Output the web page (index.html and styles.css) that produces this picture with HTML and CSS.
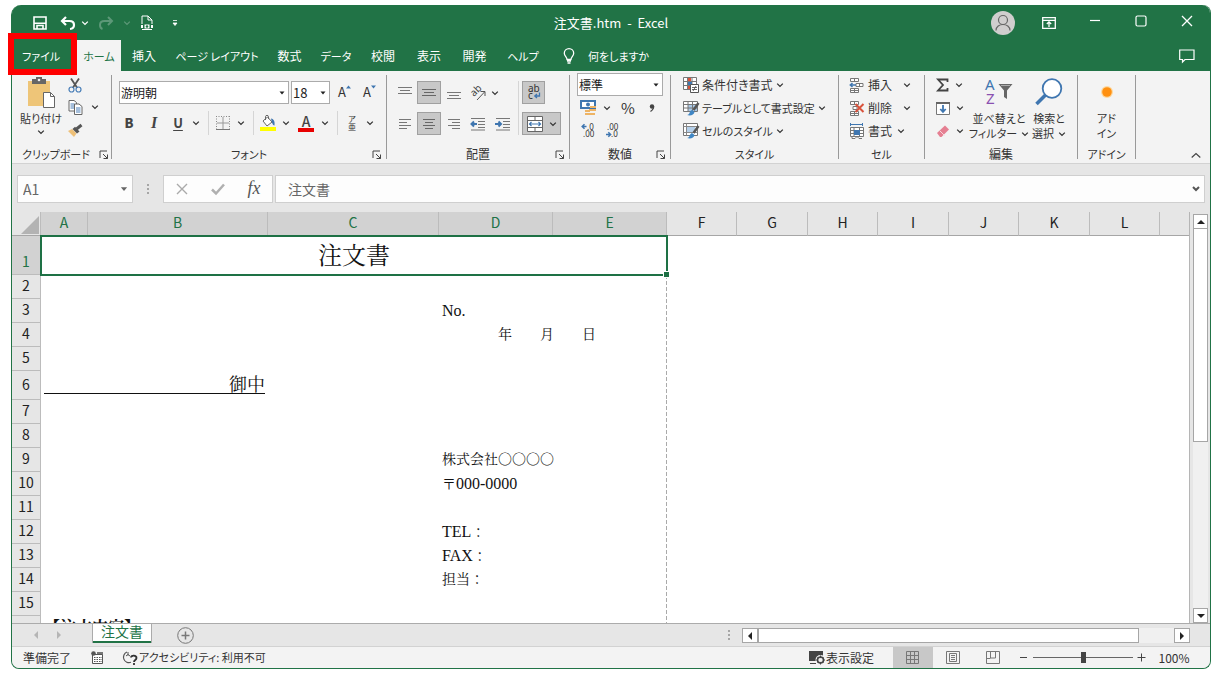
FILE: index.html
```html
<!DOCTYPE html>
<html lang="ja">
<head>
<meta charset="utf-8">
<title>注文書.htm - Excel</title>
<link rel="stylesheet" href="styles.css">
</head>
<body>
<svg class="defs" aria-hidden="true">
  <symbol id="chev" viewBox="0 0 8 8"><path d="M1.200 2.600 4 5.400 6.800 2.600" fill="none" stroke="currentColor" stroke-width="1.300"/></symbol>
  <symbol id="tri" viewBox="0 0 8 8"><path d="M1.500 2.500h5L4 5.500z" fill="currentColor"/></symbol>
  <symbol id="launch" viewBox="0 0 10 10"><path d="M1 8V1h7M4 4l4.500 4.500M8.500 4.500v4h-4" fill="none" stroke="#444"/></symbol>
  <symbol id="dots" viewBox="0 0 4 12"><path d="M1 1h2v2H1zM1 5h2v2H1zM1 9h2v2H1z" fill="#a6a6a6"/></symbol>
</svg>
<div class="window">
  <header class="titlebar">
    <div class="qat">
      <button aria-label="上書き保存"><svg width="14" height="14" viewBox="0 0 14 14"><path d="M1 1h12v12H1zM4 13V9.500h6V13" fill="none" stroke="#fff" stroke-width="1.600"/><path d="M1 6.500h12V8H1z" fill="#fff"/></svg></button>
      <button aria-label="元に戻す"><svg width="16" height="14" viewBox="0 0 16 14"><path d="M6 1 2 5l4 4M2 5h7.500c3 0 4.500 1.800 4.500 4 0 2.300-1.600 3.800-4 4" fill="none" stroke="#fff" stroke-width="2.200"/></svg></button>
      <button aria-label="元に戻すの一覧"><svg width="8" height="8"><use href="#chev"/></svg></button>
      <button class="dim" aria-label="やり直し"><svg width="16" height="14" viewBox="0 0 16 14"><path d="m10 1 4 4-4 4M14 5H6.500C3.500 5 2 6.800 2 9c0 2.300 1 3.500 2.500 4" fill="none" stroke="currentColor" stroke-width="2"/></svg></button>
      <button class="dim" aria-label="やり直しの一覧"><svg width="8" height="8"><use href="#chev"/></svg></button>
      <button aria-label="印刷プレビュー"><svg width="14" height="16" viewBox="0 0 14 16"><path d="M2 9V1h6l4 4v4M8 1v4h4M2 14.500h10" fill="none" stroke="#fff"/><path d="M1 10h2v3H1zM11 10h2v3h-2zM4.500 9.500h5v4h-5z" fill="#fff"/><circle cx="7" cy="11.500" r="1.300" fill="#217346"/></svg></button>
      <button aria-label="クイック アクセスのカスタマイズ"><svg width="8" height="8" viewBox="0 0 8 8"><path d="M2 1.500h4M2 4h4L4 6.500z" fill="#fff" stroke="#fff" stroke-width=".8"/></svg></button>
    </div>
    <h1>注文書.htm&nbsp; -&nbsp; Excel</h1>
    <div class="syscontrols">
      <button class="avatar" aria-label="アカウント"><svg width="24" height="24" viewBox="0 0 24 24"><circle cx="12" cy="12" r="12" fill="#d0cece"/><circle cx="12" cy="9" r="4.500" fill="none" stroke="#666" stroke-width="1.200"/><path d="M5 19.500c0-8 14-8 14 0" fill="none" stroke="#666" stroke-width="1.200"/></svg></button>
      <button aria-label="リボンの表示オプション"><svg width="14" height="12" viewBox="0 0 14 12"><path d="M.7.700h12.600v10.600H.7zM.7 3.300h12.600M7 10V5M4.800 7 7 4.800 9.200 7" fill="none" stroke="#fff" stroke-width="1.300"/></svg></button>
      <button aria-label="最小化"><svg width="12" height="16" viewBox="0 0 12 16"><path d="M1 5.500h10" stroke="#fff" stroke-width="1.200"/></svg></button>
      <button class="up" aria-label="最大化"><svg width="12" height="12" viewBox="0 0 12 12"><rect x="1" y="1" width="10" height="10" rx="1.500" fill="none" stroke="#fff" stroke-width="1.200"/></svg></button>
      <button class="up" aria-label="閉じる"><svg width="12" height="12" viewBox="0 0 12 12"><path d="m1 1 10 10M11 1 1 11" stroke="#fff" stroke-width="1.300"/></svg></button>
    </div>
  </header>

  <nav class="tabs">
    <button class="file kana">ファイル</button>
    <button class="active kana">ホーム</button>
    <button>挿入</button>
    <button class="kana">ページ レイアウト</button>
    <button>数式</button>
    <button class="kana">データ</button>
    <button>校閲</button>
    <button>表示</button>
    <button>開発</button>
    <button class="kana">ヘルプ</button>
    <button class="tellme kana"><svg width="12" height="16" viewBox="0 0 12 16"><path d="M4 11.500C4 9 1.300 8.300 1.300 5.300a4.700 4.700 0 0 1 9.400 0C10.700 8.300 8 9 8 11.500zM4 13h4M4.500 15h3" fill="none" stroke="#fff" stroke-width="1.300"/></svg>何をしますか</button>
    <button class="comment" aria-label="コメント"><svg width="16" height="14" viewBox="0 0 16 14"><path d="M.7 1h14.300v9.500H6L3.500 13v-2.500H.7z" fill="none" stroke="#fff" stroke-width="1.200"/></svg></button>
  </nav>

  <section class="ribbon">
    <div class="group g-clip">
      <div class="tools clip">
        <button class="big"><svg width="30" height="32" viewBox="0 0 30 32"><path d="M2 4h22v25H2z" fill="#eec578"/><path d="M6 2h4V0h6v2h4v5H6z" fill="#666"/><circle cx="13" cy="3" r="1.300" fill="#f3f3f3"/><path d="M17.500 15.500h7l4 4v11h-11z" fill="#fff" stroke="#666"/><path d="M24.500 15.500v4h4" fill="none" stroke="#666"/></svg><span>貼り付け</span><svg width="8" height="8"><use href="#chev"/></svg></button>
        <div class="stack">
          <button aria-label="切り取り"><svg width="14" height="15" viewBox="0 0 14 15"><path d="M3 0.500 9.300 10M11 .500 4.700 10" stroke="#555" stroke-width="1.800"/><circle cx="3.500" cy="11.500" r="2.500" fill="none" stroke="#4a7fb8" stroke-width="1.200"/><circle cx="10.500" cy="11.500" r="2.500" fill="none" stroke="#4a7fb8" stroke-width="1.200"/></svg></button>
          <button class="pair" aria-label="コピー"><svg width="15" height="15" viewBox="0 0 15 15"><path d="M1 .500h5l2.500 2V11H1z" fill="#fff" stroke="#666"/><path d="M2.500 4h4M2.500 6h4M2.500 8h4" stroke="#4a7fb8"/><path d="M6.500 4H11l3 2.500v8H6.500z" fill="#fff" stroke="#666"/><path d="M8 8h4.500M8 10h4.500M8 12h4.500" stroke="#4a7fb8"/></svg><svg width="8" height="8"><use href="#chev"/></svg></button>
          <button aria-label="書式のコピー"><svg width="15" height="13" viewBox="0 0 15 13"><path d="m0 7 4-2 4.500 4.500L6 13z" fill="#eec078"/><path d="M4.500 5 7 2.700l4.500 4.800-2.500 2z" fill="#555"/><path d="m8.500 5 5-4" stroke="#555" stroke-width="3"/></svg></button>
        </div>
      </div>
      <div class="label kana"><span>クリップボード</span><button aria-label="クリップボードの詳細"><svg width="10" height="10"><use href="#launch"/></svg></button></div>
    </div>

    <div class="group g-font">
      <div class="tools fonttools">
        <div class="fontrow">
          <label class="pick name"><select aria-label="フォント"><option>游明朝</option></select><svg width="8" height="8"><use href="#tri"/></svg></label>
          <label class="pick size"><select aria-label="フォント サイズ"><option>18</option></select><svg width="8" height="8"><use href="#tri"/></svg></label>
          <button class="grow" aria-label="フォント サイズの拡大">A<svg width="5" height="4" viewBox="0 0 5 4"><path d="M0 3.500 2.500.5 5 3.500z" fill="#3f76b0"/></svg></button>
          <button class="grow" aria-label="フォント サイズの縮小">A<svg width="5" height="4" viewBox="0 0 5 4"><path d="M0 .5h5L2.500 3.500z" fill="#3f76b0"/></svg></button>
        </div>
        <div class="stylerow">
          <button class="fmt"><b>B</b></button>
          <button class="fmt italic"><i>I</i></button>
          <button class="fmt"><u>U</u></button>
          <button aria-label="下線の種類"><svg width="8" height="8"><use href="#chev"/></svg></button>
          <i class="vsep"></i>
          <button aria-label="罫線"><svg width="14" height="14" viewBox="0 0 14 14"><path d="M.5 0v13M13.500 0v13M0 .5h14" stroke="#888" stroke-dasharray="1 1.500" fill="none"/><path d="M7 1v12M1 7h12" stroke="#999"/><path d="M0 13.500h14" stroke="#777"/></svg></button>
          <button aria-label="罫線の種類"><svg width="8" height="8"><use href="#chev"/></svg></button>
          <i class="vsep"></i>
          <button aria-label="塗りつぶしの色"><svg width="16" height="16" viewBox="0 0 16 16"><path d="M0 12h16v4H0z" fill="#ff0"/><path d="m3 6 4.500-4L12 7l-5 4z" fill="#fff" stroke="#666"/><path d="M5.500 5V1.500c0-1.500 3-1.500 3 0V4" fill="none" stroke="#666"/><path d="M11 3.500c3 .5 4 3 3.500 7-2 0-2.500-3-3.500-7" fill="#3f76b0"/></svg></button>
          <button aria-label="塗りつぶしの色の一覧"><svg width="8" height="8"><use href="#chev"/></svg></button>
          <button class="fontcolor" aria-label="フォントの色">A</button>
          <button aria-label="フォントの色の一覧"><svg width="8" height="8"><use href="#chev"/></svg></button>
          <i class="vsep"></i>
          <button class="ruby" aria-label="ふりがなの表示"><span>ア</span><span>亜</span></button>
          <button aria-label="ふりがなの設定"><svg width="8" height="8"><use href="#chev"/></svg></button>
        </div>
      </div>
      <div class="label kana"><span>フォント</span><button aria-label="フォントの詳細"><svg width="10" height="10"><use href="#launch"/></svg></button></div>
    </div>

    <div class="group g-align">
      <div class="tools aligntools">
        <button aria-label="上揃え"><svg width="14" height="12" viewBox="0 0 14 12"><path d="M0 .5h14M2 3.500h10M0 6.500h14" stroke="#777"/></svg></button>
        <button class="on" aria-label="上下中央揃え"><svg width="14" height="12" viewBox="0 0 14 12"><path d="M0 2.500h14M2 5.500h10M0 8.500h14" stroke="#666"/></svg></button>
        <button class="low" aria-label="下揃え"><svg width="14" height="12" viewBox="0 0 14 12"><path d="M0 3.500h14M2 6.500h10M0 9.500h14" stroke="#777"/></svg></button>
        <button aria-label="方向"><svg width="16" height="16" viewBox="0 0 16 16"><text x="0" y="0" transform="translate(4 12) rotate(-45)" font-size="10" font-family="Noto Sans" fill="#444">ab</text><path d="m7 15 7.500-8M10.500 6.500H15V11" fill="none" stroke="#555"/></svg></button>
        <button class="start" aria-label="方向の一覧"><svg width="8" height="8"><use href="#chev"/></svg></button>
        <i class="vsep tall"></i>
        <button class="on wrap" aria-label="折り返して全体を表示する"><svg width="16" height="17" viewBox="0 0 16 17"><text x="2" y="8" font-size="10" font-family="Noto Sans" fill="#333">ab</text><text x="2" y="15" font-size="10" font-family="Noto Sans" fill="#333">c</text><path d="M13.500 8.500v3.500H9M11 10l-2.200 2L11 14" fill="none" stroke="#3f76b0" stroke-width="1.300"/></svg></button>
        <button aria-label="左揃え"><svg width="12" height="12" viewBox="0 0 12 12"><path d="M0 1.500h12M0 4.500h8M0 7.500h12M0 10.500h8" stroke="#777"/></svg></button>
        <button class="on" aria-label="中央揃え"><svg width="14" height="12" viewBox="0 0 14 12"><path d="M1 1.500h12M3 4.500h8M1 7.500h12M3 10.500h8" stroke="#666"/></svg></button>
        <button aria-label="右揃え"><svg width="12" height="12" viewBox="0 0 12 12"><path d="M0 1.500h12M4 4.500h8M0 7.500h12M4 10.500h8" stroke="#777"/></svg></button>
        <button aria-label="インデントを減らす"><svg width="16" height="14" viewBox="0 0 16 14"><path d="M1 1.500h14M8 4.500h7M8 7.500h7M8 10.500h7M1 13h14" stroke="#777"/><path d="M7 7H2M4 4.500 1.500 7 4 9.500" fill="none" stroke="#3f76b0" stroke-width="2"/></svg></button>
        <button aria-label="インデントを増やす"><svg width="16" height="14" viewBox="0 0 16 14"><path d="M1 1.500h14M8 4.500h7M8 7.500h7M8 10.500h7M1 13h14" stroke="#777"/><path d="M0 7h5M3.500 4.500 6 7 3.500 9.500" fill="none" stroke="#3f76b0" stroke-width="2"/></svg></button>
        <button class="on pair" aria-label="セルを結合して中央揃え"><svg width="16" height="16" viewBox="0 0 16 16"><path d="M.5.500h15v15H.5zM.5 4.500h15M.5 11.500h15M8 .500v4M8 11.500v4" fill="#fff" stroke="#666"/><path d="M2.500 8h11M4.500 6l-2 2 2 2M11.500 6l2 2-2 2" fill="none" stroke="#3f76b0" stroke-width="1.200"/></svg><svg width="8" height="8"><use href="#chev"/></svg></button>
      </div>
      <div class="label"><span>配置</span><button aria-label="配置の詳細"><svg width="10" height="10"><use href="#launch"/></svg></button></div>
    </div>

    <div class="group g-num">
      <div class="tools numtools">
        <label class="pick format"><select aria-label="表示形式"><option>標準</option></select><svg width="8" height="8"><use href="#tri"/></svg></label>
        <div class="numrow">
          <button aria-label="通貨表示形式"><svg width="17" height="15" viewBox="0 0 17 15"><path d="M1 1h14v7H1z" fill="#fff" stroke="#3f76b0" stroke-width="2"/><circle cx="8" cy="4.500" r="2" fill="#3f76b0"/><path d="M10 6h6v2h-6zM9 9h7v2H9zM5 10h5v2H5zM5 13h10v2H5z" fill="#eeb465"/></svg></button>
          <button aria-label="通貨の一覧"><svg width="8" height="8"><use href="#chev"/></svg></button>
          <button class="sign">%</button>
          <button class="comma" aria-label="桁区切りスタイル"><svg width="6" height="8" viewBox="0 0 6 8"><circle cx="3" cy="2.500" r="2.200" fill="#444"/><path d="M4.500 2.500c.5 2-1 3.500-3 5" fill="none" stroke="#444" stroke-width="1.300"/></svg></button>
        </div>
        <div class="decrow">
          <button aria-label="小数点以下の表示桁数を増やす"><svg width="14" height="15" viewBox="0 0 14 15"><path d="M5.500 3.500H1.500M3.500 1.300 1.200 3.500l2.300 2.200" fill="none" stroke="#3f76b0" stroke-width="1.500"/><text x="6" y="7" font-size="8" font-family="Noto Sans" fill="#333">.0</text><text x="2" y="14" font-size="8" font-family="Noto Sans" fill="#333">.00</text></svg></button>
          <button aria-label="小数点以下の表示桁数を減らす"><svg width="14" height="15" viewBox="0 0 14 15"><path d="M1 11.500h4M3.300 9.300l2.300 2.200-2.300 2.200" fill="none" stroke="#3f76b0" stroke-width="1.500"/><text x="2" y="7" font-size="8" font-family="Noto Sans" fill="#333">.00</text><text x="6" y="14" font-size="8" font-family="Noto Sans" fill="#333">.0</text></svg></button>
        </div>
      </div>
      <div class="label"><span>数値</span><button aria-label="数値の詳細"><svg width="10" height="10"><use href="#launch"/></svg></button></div>
    </div>

    <div class="group g-style">
      <div class="tools list">
        <button><svg width="16" height="16" viewBox="0 0 16 16"><path d="M.5.500h13v12H.5zM.5 4.500h13M.5 8.500h13M4.500.500v12M9 .500v12" fill="#fff" stroke="#777"/><path d="M5 1h3v3H5zM5 9h3v3H5z" fill="#d9533c"/><path d="M5 5h4v3H5z" fill="#3f76b0"/><path d="M7.500 7.500h8v8h-8z" fill="#fff" stroke="#555"/><path d="M9 10.500h5M9 12.500h5M13 9l-3 5" stroke="#444" stroke-width=".8"/></svg>条件付き書式<svg width="8" height="8"><use href="#chev"/></svg></button>
        <button class="kana"><svg width="16" height="16" viewBox="0 0 16 16"><path d="M.5 1.500h14v10H.5z" fill="#fff"/><path d="M5 5h9v6H5z" fill="#a9c8e6"/><path d="M.5 1.500h14v10H.5zM.5 4.500h14M.5 8h14M5 1.500v10M9.500 1.500v10" fill="none" stroke="#777"/><path d="m15.500 3-5 7" stroke="#555" stroke-width="2.500"/><path d="M4 15c3 0 2-4 5-5l2.500 2c-.5 3-4 4-7.500 3" fill="#3f86c4"/></svg>テーブルとして書式設定<svg width="8" height="8"><use href="#chev"/></svg></button>
        <button class="kana"><svg width="16" height="16" viewBox="0 0 16 16"><path d="M.5.500h14v12H.5z" fill="#fff" stroke="#777"/><path d="M3 4h9v5H3z" fill="#b5d0ea"/><path d="M.5 3.500h14M3.500.500v12M.5 9.500h14" stroke="#888"/><path d="m15.500 3-5 7" stroke="#555" stroke-width="2.500"/><path d="M4 15c3 0 2-4 5-5l2.500 2c-.5 3-4 4-7.500 3" fill="#3f86c4"/></svg>セルのスタイル<svg width="8" height="8"><use href="#chev"/></svg></button>
      </div>
      <div class="label kana"><span>スタイル</span></div>
    </div>

    <div class="group g-cell">
      <div class="tools list">
        <button class="spread"><svg width="15" height="15" viewBox="0 0 15 15"><path d="M1.500.500h8v3h-8zM5.500.500v3M1.500 10.500h8v4h-8zM5.500 10.500v4M1.500 12.500h8M7 5.500h7v3H7zM10.500 5.500v3" fill="#fff" stroke="#777"/><path d="M7 7H1.500M3.500 5 1.300 7l2.200 2" fill="none" stroke="#3f76b0" stroke-width="1.500"/></svg>挿入<svg width="8" height="8"><use href="#chev"/></svg></button>
        <button class="spread"><svg width="15" height="15" viewBox="0 0 15 15"><path d="M1.500.500h8v3h-8zM5.500.500v3M1.500 10.500h8v4h-8zM5.500 10.500v4M1.500 12.500h8M4 5.500h4v3H4z" fill="#fff" stroke="#777"/><path d="m6.500 3 8 8M14.500 3l-8 8" stroke="#d9533c" stroke-width="2"/></svg>削除<svg width="8" height="8"><use href="#chev"/></svg></button>
        <button class="spread near"><svg width="15" height="16" viewBox="0 0 15 16"><path d="M1.500 0v3M13.500 0v3M2 1.500h11" stroke="#3f76b0"/><path d="M1.500 4.500h13v9h-13zM1.500 7.500h13M1.500 10.500h13M5 4.500v9M10.500 4.500v9M3 13.500v2h3l2-2 2 2h3" fill="#fff" stroke="#777"/><path d="M5 7h6v5H5z" fill="#3f76b0"/></svg>書式<svg width="8" height="8"><use href="#chev"/></svg></button>
      </div>
      <div class="label kana"><span>セル</span></div>
    </div>

    <div class="group g-edit">
      <div class="tools edit">
        <div class="list">
          <button class="sum" aria-label="オート SUM"><svg width="13" height="14" viewBox="0 0 13 14"><path d="M11.500 4V1.500H2L7 7l-5 5.500h9.500V10" fill="none" stroke="#444" stroke-width="1.800"/></svg><svg width="8" height="8"><use href="#chev"/></svg></button>
          <button aria-label="フィル"><svg width="14" height="14" viewBox="0 0 14 14"><path d="M.5 1.500h13v12H.5z" fill="#fff" stroke="#777"/><path d="M0 1h14v2H0z" fill="#666"/><path d="M7 4v7M4.300 8 7 11l2.700-3" fill="none" stroke="#3f76b0" stroke-width="1.800"/></svg><svg width="8" height="8"><use href="#chev"/></svg></button>
          <button aria-label="クリア"><svg width="14" height="14" viewBox="0 0 14 14"><path d="m1 9 8-7.500 4 4L5.500 13H4z" fill="#e57f92"/><path d="m3.500 6.500 5 5" stroke="#f8d5da"/></svg><svg width="8" height="8"><use href="#chev"/></svg></button>
        </div>
        <button class="big"><svg width="30" height="28" viewBox="0 0 30 28"><text x="1" y="12" font-size="15" font-family="Noto Sans" fill="#3f76b0">A</text><text x="2" y="26" font-size="15" font-family="Noto Sans" fill="#8a50b0">Z</text><path d="M14.500 6h14L23 12.500V21l-3-2v-6.500z" fill="#666"/><path d="M17 7.500h9" stroke="#aaa"/></svg><span>並べ替えと</span><span>フィルター <svg width="8" height="8"><use href="#chev"/></svg></span></button>
        <button class="big"><svg width="28" height="28" viewBox="0 0 28 28"><circle cx="17" cy="10.500" r="9.300" fill="#fff" stroke="#3f76b0" stroke-width="1.800"/><path d="M10.500 17 1.500 26" stroke="#3f76b0" stroke-width="3.500"/></svg><span>検索と</span><span>選択 <svg width="8" height="8"><use href="#chev"/></svg></span></button>
      </div>
      <div class="label"><span>編集</span></div>
    </div>

    <div class="group g-addin">
      <div class="tools addin">
        <button class="big"><svg width="28" height="28" viewBox="0 0 28 28"><circle cx="14" cy="14" r="6" fill="#fdd9a0"/><circle cx="14" cy="14" r="4.800" fill="#ff9010"/></svg><span>アド</span><span>イン</span></button>
      </div>
      <div class="label kana"><span>アドイン</span></div>
    </div>
    <button class="collapse" aria-label="リボンを折りたたむ"><svg width="10" height="8" viewBox="0 0 10 8"><path d="m.7 6.500 4.300-4 4.300 4" fill="none" stroke="#444" stroke-width="1.200"/></svg></button>
  </section>

  <section class="formulabar">
    <div class="namebox"><input value="A1" aria-label="名前ボックス"><button aria-label="名前の一覧"><svg width="10" height="10"><use href="#tri"/></svg></button></div>
    <svg class="grip" width="4" height="12"><use href="#dots"/></svg>
    <div class="fxbox">
      <button aria-label="キャンセル"><svg width="12" height="12" viewBox="0 0 12 12"><path d="m1 1 10 10M11 1 1 11" stroke="#aaa" stroke-width="1.400"/></svg></button>
      <button aria-label="入力"><svg width="14" height="12" viewBox="0 0 14 12"><path d="m1 6.500 4 4L13 1.500" fill="none" stroke="#b0b0b0" stroke-width="2.500"/></svg></button>
      <button class="fx" aria-label="関数の挿入">fx</button>
    </div>
    <div class="formula"><input value="注文書" aria-label="数式バー"><button aria-label="数式バーの展開"><svg width="8" height="6" viewBox="0 0 8 6"><path d="m1 1 3 3 3-3" fill="none" stroke="#555" stroke-width="2"/></svg></button></div>
  </section>

  <main class="workspace">
    <div class="sheet">
      <table>
        <colgroup><col class="c-head"><col class="c-a"><col class="c-b"><col class="c-c"><col class="c-d"><col class="c-d"><col class="c-n"><col class="c-w"><col class="c-n"><col class="c-w"><col class="c-n"><col class="c-w"><col class="c-n"><col></colgroup>
        <thead>
          <tr><th class="corner" aria-label="すべて選択"><svg width="18" height="18" viewBox="0 0 18 18"><path d="M18 0v18H0z" fill="#b3b3b3"/></svg></th><th class="sel">A</th><th class="sel">B</th><th class="sel">C</th><th class="sel">D</th><th class="sel">E</th><th>F</th><th>G</th><th>H</th><th>I</th><th>J</th><th>K</th><th>L</th><th></th></tr>
        </thead>
        <tbody>
          <tr class="r-title"><th class="sel">1</th><td class="selected" colspan="5">注文書<i class="handle"></i></td><td colspan="8"></td></tr>
          <tr><th>2</th><td colspan="5" class="edge"></td><td colspan="8"></td></tr>
          <tr><th>3</th><td colspan="3"></td><td colspan="2" class="edge"><span class="latin">No.</span></td><td colspan="8"></td></tr>
          <tr><th>4</th><td colspan="3"></td><td colspan="2" class="edge">　　　　年　　月　　日</td><td colspan="8"></td></tr>
          <tr><th>5</th><td colspan="5" class="edge"></td><td colspan="8"></td></tr>
          <tr class="r-to"><th>6</th><td colspan="2" class="to"><div>御中</div></td><td colspan="3" class="edge"></td><td colspan="8"></td></tr>
          <tr><th>7</th><td colspan="5" class="edge"></td><td colspan="8"></td></tr>
          <tr><th>8</th><td colspan="5" class="edge"></td><td colspan="8"></td></tr>
          <tr><th>9</th><td colspan="3"></td><td colspan="2" class="edge">株式会社〇〇〇〇</td><td colspan="8"></td></tr>
          <tr><th>10</th><td colspan="3"></td><td colspan="2" class="edge">〒<span class="latin">000-0000</span></td><td colspan="8"></td></tr>
          <tr><th>11</th><td colspan="5" class="edge"></td><td colspan="8"></td></tr>
          <tr><th>12</th><td colspan="3"></td><td colspan="2" class="edge"><span class="latin">TEL</span>：</td><td colspan="8"></td></tr>
          <tr><th>13</th><td colspan="3"></td><td colspan="2" class="edge"><span class="latin">FAX</span>：</td><td colspan="8"></td></tr>
          <tr><th>14</th><td colspan="3"></td><td colspan="2" class="edge">担当：</td><td colspan="8"></td></tr>
          <tr><th>15</th><td colspan="5" class="edge"></td><td colspan="8"></td></tr>
          <tr><th></th><td colspan="5" class="edge heading">【注文内容】</td><td colspan="8"></td></tr>
        </tbody>
      </table>
    </div>
    <div class="vscroll">
      <button aria-label="上へスクロール"><svg width="8" height="6" viewBox="0 0 8 6"><path d="m0 5 4-4 4 4z" fill="#222"/></svg></button>
      <div class="thumb"></div>
      <button aria-label="下へスクロール"><svg width="8" height="6" viewBox="0 0 8 6"><path d="m0 1 4 4 4-4z" fill="#222"/></svg></button>
    </div>
  </main>

  <div class="sheetbar">
    <div class="sheetnav">
      <button aria-label="前のシート"><svg width="6" height="8" viewBox="0 0 6 8"><path d="M5 0v8L1 4z" fill="#b5b5b5"/></svg></button>
      <button aria-label="次のシート"><svg width="6" height="8" viewBox="0 0 6 8"><path d="M1 0v8l4-4z" fill="#b5b5b5"/></svg></button>
    </div>
    <button class="sheettab">注文書</button>
    <button class="add" aria-label="新しいシート"><svg width="17" height="17" viewBox="0 0 17 17"><path d="M8.500 4.500v8M4.500 8.500h8" stroke="#777" stroke-width="1.500"/><circle cx="8.500" cy="8.500" r="7.800" fill="none" stroke="#777"/></svg></button>
    <svg class="split" width="4" height="12"><use href="#dots"/></svg>
    <div class="hscroll">
      <button aria-label="左へスクロール"><svg width="6" height="8" viewBox="0 0 6 8"><path d="M5 0v8L1 4z" fill="#222"/></svg></button>
      <div class="thumb"></div>
      <button aria-label="右へスクロール"><svg width="6" height="8" viewBox="0 0 6 8"><path d="M1 0v8l4-4z" fill="#222"/></svg></button>
    </div>
  </div>

  <footer class="status">
    <span class="ready">準備完了</span>
    <button class="macro" aria-label="マクロの記録"><svg width="13" height="13" viewBox="0 0 13 13"><path d="M1.500 3.500h10v9h-10z" fill="#fff" stroke="#555"/><path d="M6 3h6M3 6.500h8M3 8.500h8M3 10.500h8" stroke="#555" stroke-dasharray="1.500 1"/><circle cx="2.500" cy="2.500" r="2.300" fill="#555"/><path d="M6 1h6v2H6z" fill="#777"/></svg></button>
    <button class="a11y kana"><svg width="16" height="14" viewBox="0 0 16 14"><path d="M5 1a5.500 5.500 0 1 0 4 10.300" fill="none" stroke="#555" stroke-width="1.200"/><path d="M6 1v3.500M4 5l2-1.500 2 1.500" fill="none" stroke="#555"/><path d="M9 6.500C9 4 14.500 4 14.500 7c0 2-2.500 2-2.500 4M12 12v2" fill="none" stroke="#333" stroke-width="1.800"/></svg>アクセシビリティ: 利用不可</button>
    <button class="display"><svg width="17" height="15" viewBox="0 0 17 15"><path d="M0 1h14v10H0z" fill="#444"/><path d="M1 13.500h6" stroke="#444"/><circle cx="11.500" cy="10" r="5" fill="#f3f3f3"/><circle cx="11.500" cy="10" r="3" fill="none" stroke="#444" stroke-width="1.500"/><path d="M11.500 5.500v9M7 10h9M8.500 7l6 6M14.500 7l-6 6" stroke="#444"/><circle cx="11.500" cy="10" r="2" fill="#f3f3f3"/></svg>表示設定</button>
    <button class="view current" aria-label="標準"><svg width="14" height="14" viewBox="0 0 14 14"><path d="M.5.500h12v12H.5zM.5 4.500h12M.5 8.500h12M4.500.500v12M8.500.500v12" fill="none" stroke="#777"/></svg></button>
    <button class="view" aria-label="ページ レイアウト"><svg width="14" height="14" viewBox="0 0 14 14"><path d="M.5.500h13v12H.5zM3.500 2.500h7v8h-7zM5 4.500h4M5 6.500h4M5 8.500h4" fill="none" stroke="#777"/></svg></button>
    <button class="view" aria-label="改ページ プレビュー"><svg width="14" height="14" viewBox="0 0 14 14"><path d="M.5.500h13v12H.5zM4.500.500v6.500h5V.500M.5 7.500h4" fill="none" stroke="#777"/></svg></button>
    <button class="zoom" aria-label="縮小"><svg width="9" height="9" viewBox="0 0 9 9"><path d="M1 4.500h7" stroke="#444"/></svg></button>
    <input class="slider" type="range" min="0" max="100" value="50" aria-label="ズーム">
    <button class="zoom" aria-label="拡大"><svg width="9" height="9" viewBox="0 0 9 9"><path d="M.5 4.500h8M4.500.500v8" stroke="#444"/></svg></button>
    <button class="percent">100%</button>
  </footer>
</div>
</body>
</html>
```
FILE: styles.css
```css
* { box-sizing: border-box; }
body {
  margin: 0;
  padding: 5px 10px 11px 11px;
  height: 100vh;
  background: #fff;
  color: #333;
  font: 12px/16px "Noto Sans CJK JP", "Noto Sans", sans-serif;
  font-feature-settings: "palt";
}
button, input, select {
  margin: 0;
  padding: 0;
  border: 0;
  background: none;
  color: inherit;
  font: inherit;
  font-feature-settings: inherit;
  border-radius: 0;
}
button {
  display: flex;
  align-items: center;
  justify-content: center;
  white-space: nowrap;
}
svg { flex: none; display: block; overflow: visible; }
.defs { position: absolute; width: 0; height: 0; }
.kana { font-size: 11px; }

.window {
  height: 100%;
  display: flex;
  flex-direction: column;
  border: 1px solid #217346;
  border-top: 0;
  border-radius: 10px 8px 8px 8px;
  background: #e6e6e6;
}

/* title bar */
.titlebar {
  display: grid;
  grid-template-columns: 1fr auto 1fr;
  align-items: center;
  height: 35px;
  flex: none;
  background: #217346;
  color: #fff;
  border-radius: 9px 8px 0 0;
}
.titlebar h1 { margin: 0; font-size: 13px; font-weight: 400; }
.qat {
  display: grid;
  grid-template-columns: 26px 30px 4px 38px 4px 36px 20px;
  padding-left: 15px;
}
.dim { color: #5d9878; }
.syscontrols { display: flex; justify-content: flex-end; }
.syscontrols button { width: 46px; height: 32px; }
.syscontrols .up { padding-bottom: 4px; }

/* ribbon tabs */
.tabs {
  display: grid;
  grid-template-columns: 65px 44px 46px 100px 45px 48px 46px 46px 45px 52px auto 1fr;
  height: 31px;
  flex: none;
  background: #217346;
  color: #fff;
}
.tabs .active { background: #f3f3f3; color: #217346; }
.tabs .tellme { gap: 13px; padding-left: 14px; }
.tabs .comment { justify-self: end; padding-right: 15px; }
.file { position: relative; padding-right: 7px; }
.file::after {
  content: "";
  position: absolute;
  inset: -7px 0 -4px -4px;
  border: 6px solid #fe0000;
}

/* ribbon */
.ribbon {
  display: flex;
  flex: none;
  height: 93px;
  padding: 0 7px 4px 1px;
  background: #f3f3f3;
  border-bottom: 1px solid #d2d2d2;
}
.group {
  display: flex;
  flex-direction: column;
  margin-top: 4px;
  border-right: 1px solid #999;
}
.g-clip { width: 99px; }
.g-font { width: 275px; }
.g-align { width: 183px; }
.g-num { width: 101px; }
.g-style { width: 168px; }
.g-cell { width: 86px; }
.g-edit { width: 153px; }
.g-addin { width: 58px; }
.tools { flex: 1; min-height: 0; }
.label {
  display: grid;
  grid-template-columns: 14px 1fr 14px;
  height: 10px;
  line-height: 10px;
}
.label span { grid-column: 2; text-align: center; white-space: nowrap; }
.label button { justify-content: flex-start; height: 12px; }
.g-clip .label { grid-template-columns: 0 1fr 12px; }
.collapse { margin-left: auto; align-self: flex-end; width: 14px; height: 8px; }

.big { flex-direction: column; justify-content: flex-start; line-height: 15px; font-size: 11px; }
.big span { display: flex; align-items: center; gap: 4px; }
.clip { display: flex; padding-left: 5px; }
.clip .big { width: 46px; gap: 2px; padding-top: 2px; }
.stack { display: grid; grid-template-rows: 20px 24px 22px; justify-items: start; padding-left: 4px; }
.pair { gap: 8px; }

.fonttools { padding: 6px 5px 0 7px; display: flex; flex-direction: column; gap: 7px; }
.fontrow { display: flex; gap: 2px; }
.pick { display: grid; align-items: center; height: 23px; border: 1px solid #ababab; background: #fff; color: #222; }
.pick select { grid-area: 1 / 1; width: 100%; height: 100%; padding-left: 1px; appearance: none; outline: 0; }
.pick svg { grid-area: 1 / 1; justify-self: end; margin-right: 2px; pointer-events: none; }
.pick.name { width: 170px; }
.pick.size { width: 39px; }
.pick.size select { font-size: 13px; }
.pick.format { width: 86px; }
.grow { width: 21px; margin-left: 2px; font-size: 13px; align-items: flex-start; padding-top: 3px; }
.grow svg { margin-top: 1px; }
.stylerow {
  display: grid;
  grid-template-columns: 24px 26px 22px 14px 10px 20px 16px 8px 22px 14px 26px 12px 12px 18px 18px;
  height: 24px;
  margin-left: -2px;
}
.fmt { font-size: 13px; font-weight: 700; color: #444; }
.italic { font-family: "Liberation Serif", serif; font-size: 16px; }
.fmt u { text-underline-offset: 2px; }
.vsep { width: 1px; justify-self: center; background: #d5d5d5; }
.fontcolor {
  justify-self: center;
  align-self: center;
  width: 16px;
  height: 18px;
  line-height: 14px;
  border-bottom: 4px solid #e80000;
  font-size: 14px;
  font-weight: 500;
  color: #444;
}
.ruby { flex-direction: column; font-size: 8px; line-height: 8px; }

.aligntools {
  display: grid;
  grid-template-columns: 24px 25px 23px 26px 24px 7px 39px;
  grid-template-rows: 23px 23px;
  row-gap: 8px;
  padding: 6px 0 0 6px;
}
.on { background: #c8c8c8; border: 1px solid #a0a0a0; width: 24px; }
.on.wrap { width: 23px; }
.on.pair { width: 39px; gap: 6px; }
.low { padding-top: 4px; }
.start { justify-content: flex-start; }
.tall { grid-row: 1 / 3; grid-column: 6; }

.numtools { display: flex; flex-direction: column; padding-left: 7px; margin-top: -2px; }
.numrow { display: grid; grid-template-columns: 22px 16px 26px 22px; height: 23px; }
.sign { font-size: 15px; }
.decrow { display: flex; gap: 10px; height: 22px; padding-left: 4px; }

.list { display: grid; grid-template-rows: 20px 26px 20px; justify-items: start; }
.g-style .list { padding-left: 12px; }
.g-cell .list { padding-left: 10px; }
.list button { gap: 4px; }
.g-style .list button { gap: 3px; }
.spread { width: 62px; }
.spread svg:last-child { margin-left: auto; }
.spread.near { width: 56px; }
.edit { display: grid; grid-template-columns: 46px 56px 44px; }
.edit .list { padding-left: 11px; }
.edit .list button { gap: 6px; }
.edit .big, .addin .big { padding-top: 3px; }
.edit .big > svg, .addin .big > svg { margin-bottom: 5px; }
.addin { display: grid; }
.g-addin .label { grid-template-columns: 0 1fr 0; }

/* formula bar */
.formulabar { display: flex; align-items: center; flex: none; height: 48px; padding: 1px 5px 0 5px; color: #666; }
.formulabar input { min-width: 0; flex: 1; outline: 0; font-size: 14px; line-height: 20px; }
.namebox, .fxbox, .formula { display: flex; height: 28px; background: #fdfdfd; border: 1px solid #cfcfcf; }
.namebox { width: 116px; padding: 0 3px 0 5px; }
.grip { margin: 0 13px; }
.fxbox { width: 110px; margin-right: 2px; }
.fxbox button { flex: 1; }
.fx { font: italic 18px "Liberation Serif", serif; color: #555; }
.formula { flex: 1; padding: 0 4px 0 12px; }

/* grid */
.workspace { display: flex; flex: 1; min-height: 0; padding-right: 2px; }
.sheet { flex: 1; min-width: 0; overflow: hidden; border-right: 1px solid #b5b5b5; }
table { width: 100%; table-layout: fixed; border-spacing: 0; background: #fff; }
.c-head { width: 29px; }
.c-a { width: 47px; }
.c-b { width: 180px; }
.c-c { width: 171px; }
.c-d { width: 114px; }
.c-n { width: 70px; }
.c-w { width: 71px; }
th {
  padding: 0 0 3px;
  background: #e6e6e6;
  border-right: 1px solid #bcbcbc;
  border-bottom: 1px solid #bcbcbc;
  color: #222;
  font-size: 14px;
  font-weight: 400;
  line-height: 20px;
}
thead th { height: 24px; border-bottom-color: #a6a6a6; }
thead th:last-child { border-right: 0; }
th.sel { background: #d2d2d2; color: #217346; }
th.corner { padding: 0; }
.corner svg { margin: 2px 0 0 9px; }
td {
  padding: 0 0 0 3px;
  color: #111;
  font: 14px/20px "Liberation Serif", "Noto Serif CJK JP", "Noto Sans CJK JP", serif;
  font-feature-settings: normal;
  white-space: pre;
}
tbody tr { height: 24px; }
tbody .r-title { height: 39px; }
.r-title th { vertical-align: bottom; }
tbody .r-to { height: 29px; }
.latin { font-size: 16px; }
.edge { background: repeating-linear-gradient(#aaa 0 4px, transparent 4px 6px) right / 1px 100% no-repeat; }
.selected {
  position: relative;
  padding: 0;
  text-align: center;
  font-size: 24px;
  line-height: 28px;
  outline: 2px solid #1e7145;
  outline-offset: -1px;
}
.handle { position: absolute; right: -2px; bottom: -2px; width: 5px; height: 5px; background: #1e7145; outline: 1px solid #fff; }
.to { padding-right: 3px; vertical-align: bottom; }
.to div { margin-bottom: 6px; border-bottom: 1px solid #111; text-align: right; font-size: 18px; line-height: 16px; }
.heading { font-size: 16px; font-weight: 700; }

/* scroll bars */
.vscroll { display: flex; flex-direction: column; width: 15px; margin: 2px 0 0 3px; background: #f0f0f0; }
.vscroll button { height: 15px; background: #fff; border: 1px solid #a6a6a6; }
.vscroll button:last-child { margin-top: auto; }
.vscroll .thumb { height: 52%; background: #fff; border: 1px solid #a6a6a6; border-top: 0; }
.sheetbar { display: flex; flex: none; height: 23px; padding-right: 20px; border-top: 1px solid #ababab; }
.sheetnav { display: flex; justify-content: space-between; width: 80px; padding: 0 30px 0 21px; }
.sheettab { align-items: flex-start; width: 60px; height: 19px; background: #fff; border: 1px solid #ababab; border-width: 0 1px; box-shadow: inset 0 -2px #217346; color: #217346; font-size: 14px; line-height: 15px; }
.add { margin-left: 25px; }
.split { margin: 5px 11px 0 auto; }
.hscroll { display: flex; flex: 0 1 448px; height: 15px; margin-top: 4px; background: #f0f0f0; }
.hscroll button { width: 16px; background: #fff; border: 1px solid #a6a6a6; }
.hscroll .thumb { width: 85%; background: #fff; border: 1px solid #a6a6a6; }
.hscroll button:last-child { margin-left: auto; }

/* status bar */
.status {
  display: flex;
  align-items: stretch;
  flex: none;
  height: 22px;
  padding: 0 19px 0 11px;
  background: #f3f3f3;
  border-top: 1px solid #d2d2d2;
  border-radius: 0 0 8px 8px;
  line-height: 21px;
}
.macro { margin-left: 20px; }
.a11y { margin-left: 18px; gap: 1px; }
.display { margin-left: auto; margin-right: 19px; }
.view { width: 40px; }
.current { background: #c8c8c8; }
.zoom { width: 20px; }
.slider { appearance: none; width: 100px; background: linear-gradient(#666, #666) center / 100% 1px no-repeat; }
.slider + .zoom { width: 16px; }
.slider::-webkit-slider-thumb { appearance: none; width: 5px; height: 11px; background: #444; }
.percent { margin-left: 8px; min-width: 34px; }
```
